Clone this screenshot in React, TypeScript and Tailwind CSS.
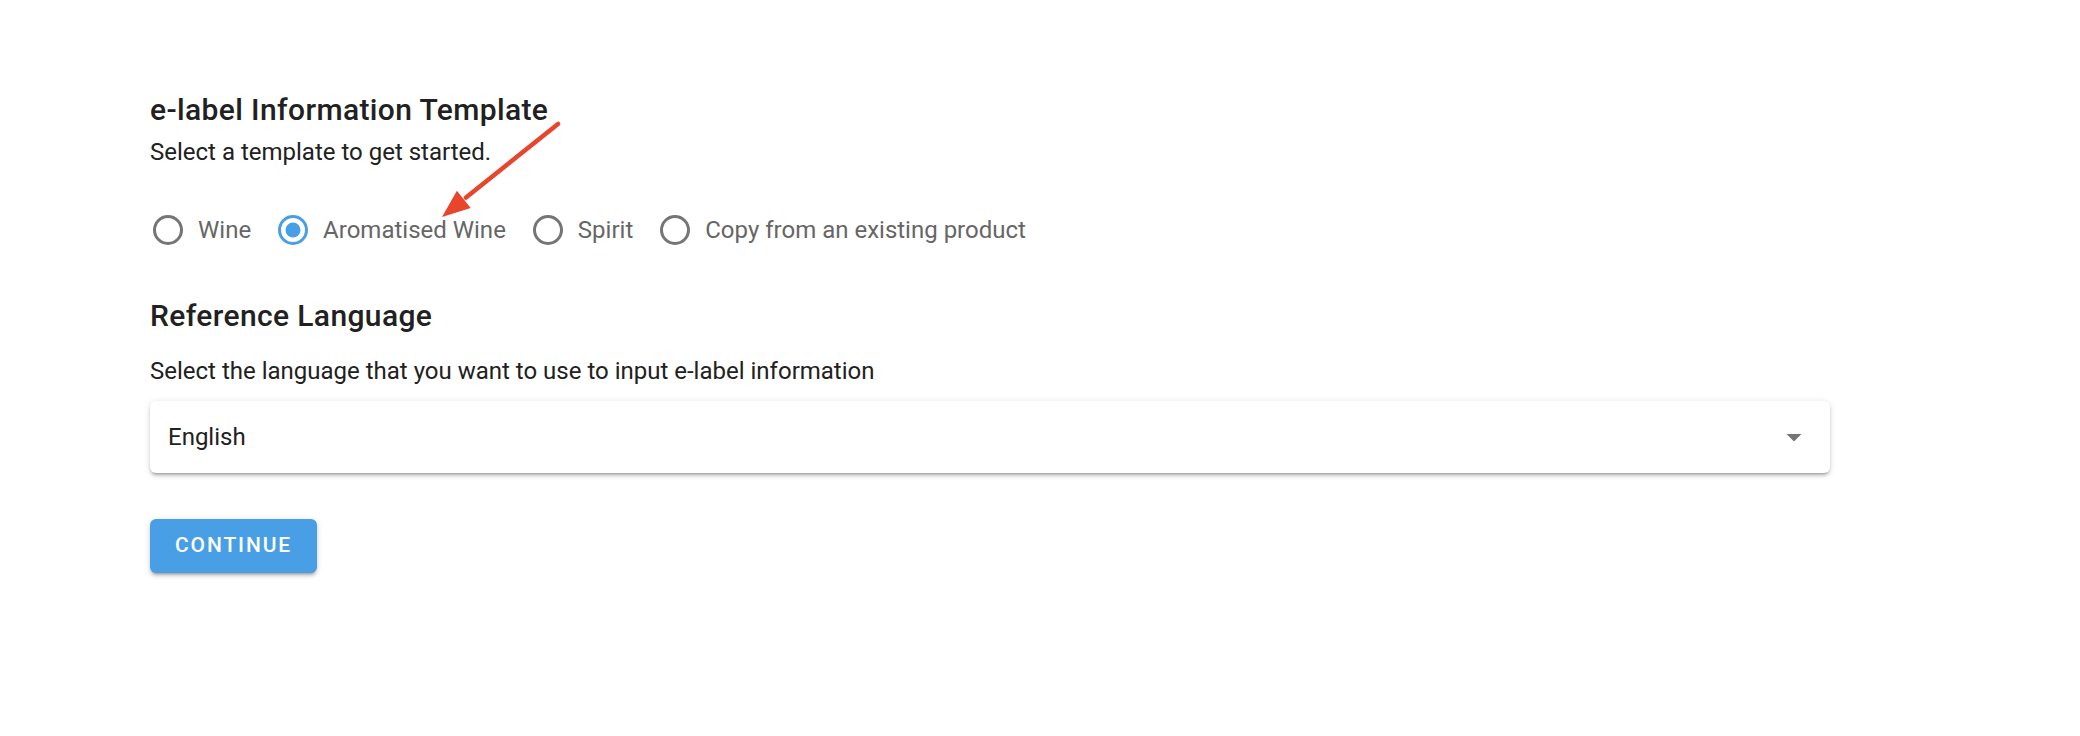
import React from "react";

function Radio({ label, checked }: { label: string; checked?: boolean }) {
  return (
    <label className="flex items-center h-[36px] mr-[24px] cursor-pointer">
      <svg width="36" height="36" viewBox="0 0 24 24" className="shrink-0">
        <path
          fill={checked ? "#489FE5" : "#757575"}
          d="M12,20A8,8 0 0,1 4,12A8,8 0 0,1 12,4A8,8 0 0,1 20,12A8,8 0 0,1 12,20M12,2A10,10 0 0,0 2,12A10,10 0 0,0 12,22A10,10 0 0,0 22,12A10,10 0 0,0 12,2Z"
        />
        {checked && <circle cx="12" cy="12" r="5" fill="#489FE5" />}
      </svg>
      <span className="ml-[12px] text-[24px] leading-[36px] text-[#666666]">{label}</span>
    </label>
  );
}

export default function App() {
  return (
    <div className="relative min-h-[736px] w-full bg-white font-['Roboto',sans-serif] text-[#212121]">
      <div className="flex flex-col items-start pl-[150px] pt-[86px]">
        <h2 className="text-[30px] leading-[48px] font-medium tracking-[0.0125em]">
          e-label Information Template
        </h2>
        <p className="text-[24px] leading-[36px]">Select a template to get started.</p>

        <div className="mt-[42px] flex items-center">
          <Radio label="Wine" />
          <Radio label="Aromatised Wine" checked />
          <Radio label="Spirit" />
          <Radio label="Copy from an existing product" />
        </div>

        <h2 className="mt-[44px] text-[30px] leading-[48px] font-medium tracking-[0.0125em]">
          Reference Language
        </h2>
        <p className="mt-[13px] text-[24px] leading-[36px]">
          Select the language that you want to use to input e-label information
        </p>

        <div className="mt-[12px] flex h-[72px] w-[1680px] items-center justify-between rounded-[6px] bg-white px-[18px] shadow-[0_4px_2px_-3px_rgba(0,0,0,0.2),0_3px_3px_0_rgba(0,0,0,0.14),0_1.5px_7px_0_rgba(0,0,0,0.12)]">
          <span className="text-[24px] leading-[36px] text-[#212121]">English</span>
          <svg width="36" height="36" viewBox="0 0 24 24">
            <path d="M7,10L12,15L17,10H7Z" fill="#757575" />
          </svg>
        </div>

        <button className="mt-[46px] h-[54px] rounded-[6px] bg-[#489FE5] px-[25px] text-[21px] font-medium uppercase tracking-[0.0892857em] text-white shadow-[0_4px_2px_-3px_rgba(0,0,0,0.2),0_3px_3px_0_rgba(0,0,0,0.14),0_1.5px_7px_0_rgba(0,0,0,0.12)]">
          Continue
        </button>
      </div>

      <svg
        className="pointer-events-none absolute left-0 top-0"
        width="2080"
        height="736"
        viewBox="0 0 2080 736"
      >
        <line x1="558" y1="124" x2="466" y2="197.5" stroke="#E8452C" strokeWidth="4.5" strokeLinecap="round" />
        <polygon points="442,217 470.7,207.9 456.9,190.8" fill="#E8452C" />
      </svg>
    </div>
  );
}
